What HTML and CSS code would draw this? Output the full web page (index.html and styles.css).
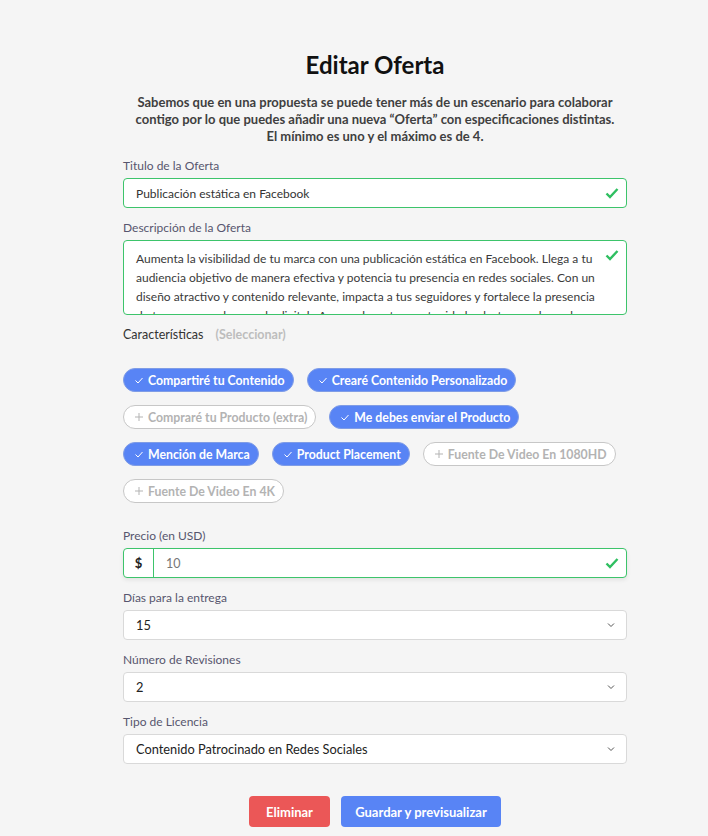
FILE: index.html
```html
<!DOCTYPE html>
<html lang="es">

<head>
    <meta charset="UTF-8">
    <meta name="viewport" content="width=device-width, initial-scale=1.0">
    <title>Editar Oferta</title>
    <link rel="stylesheet" href="styles.css">
</head>

<body>
    <main class="offer">
        <h1 class="offer-title">Editar Oferta</h1>
        <p class="offer-intro">Sabemos que en una propuesta se puede tener más de un escenario para colaborar<br>
            contigo por lo que puedes añadir una nueva “Oferta” con especificaciones distintas.<br>
            El mínimo es uno y el máximo es de 4.</p>

        <form class="offer-form">
            <div class="field">
                <label class="field-label" for="title">Titulo de la Oferta</label>
                <div class="control valid">
                    <input class="control-input small" type="text" id="title" value="Publicación estática en Facebook">
                    <svg class="check" viewBox="0 0 16 16"><path d="M2.5 8.5l3.5 3.5 7.5-8" /></svg>
                </div>
            </div>

            <div class="field">
                <label class="field-label" for="desc">Descripción de la Oferta</label>
                <div class="control valid area">
                    <div class="control-text" id="desc">Aumenta la visibilidad de tu marca con una publicación estática en Facebook. Llega a tu audiencia objetivo de manera efectiva y potencia tu presencia en redes sociales. Con un diseño atractivo y contenido relevante, impacta a tus seguidores y fortalece la presencia de tu marca en el mercado digital. ¡Aprovecha esta oportunidad y destaca en las redes sociales!</div>
                    <svg class="check top" viewBox="0 0 16 16"><path d="M2.5 8.5l3.5 3.5 7.5-8" /></svg>
                </div>
            </div>

            <div class="features">
                <div class="features-head">
                    <span>Características</span>
                    <span class="hint">(Seleccionar)</span>
                </div>
                <div class="chips">
                    <span class="chip on"><svg viewBox="0 0 10 10"><path d="M1.5 5.5l2.5 2.5 4.5-5" /></svg>Compartiré tu Contenido</span>
                    <span class="chip on"><svg viewBox="0 0 10 10"><path d="M1.5 5.5l2.5 2.5 4.5-5" /></svg>Crearé Contenido Personalizado</span>
                    <span class="chip"><svg viewBox="0 0 10 10"><path d="M5 1v8M1 5h8" /></svg>Compraré tu Producto (extra)</span>
                    <span class="chip on"><svg viewBox="0 0 10 10"><path d="M1.5 5.5l2.5 2.5 4.5-5" /></svg>Me debes enviar el Producto</span>
                    <span class="chip on"><svg viewBox="0 0 10 10"><path d="M1.5 5.5l2.5 2.5 4.5-5" /></svg>Mención de Marca</span>
                    <span class="chip on"><svg viewBox="0 0 10 10"><path d="M1.5 5.5l2.5 2.5 4.5-5" /></svg>Product Placement</span>
                    <span class="chip"><svg viewBox="0 0 10 10"><path d="M5 1v8M1 5h8" /></svg>Fuente De Video En 1080HD</span>
                    <span class="chip"><svg viewBox="0 0 10 10"><path d="M5 1v8M1 5h8" /></svg>Fuente De Video En 4K</span>
                </div>
            </div>

            <div class="field">
                <label class="field-label" for="price">Precio (en USD)</label>
                <div class="control valid shadow">
                    <span class="prefix">$</span>
                    <input class="control-input light" type="text" id="price" value="10">
                    <svg class="check" viewBox="0 0 16 16"><path d="M2.5 8.5l3.5 3.5 7.5-8" /></svg>
                </div>
            </div>

            <div class="field">
                <label class="field-label" for="days">Días para la entrega</label>
                <div class="control">
                    <span class="control-input" id="days">15</span>
                    <svg class="chevron" viewBox="0 0 10 10"><path d="M2 3.5l3 3 3-3" /></svg>
                </div>
            </div>

            <div class="field">
                <label class="field-label" for="revs">Número de Revisiones</label>
                <div class="control">
                    <span class="control-input" id="revs">2</span>
                    <svg class="chevron" viewBox="0 0 10 10"><path d="M2 3.5l3 3 3-3" /></svg>
                </div>
            </div>

            <div class="field">
                <label class="field-label" for="lic">Tipo de Licencia</label>
                <div class="control">
                    <span class="control-input" id="lic">Contenido Patrocinado en Redes Sociales</span>
                    <svg class="chevron" viewBox="0 0 10 10"><path d="M2 3.5l3 3 3-3" /></svg>
                </div>
            </div>

            <div class="actions">
                <button type="button" class="btn danger">Eliminar</button>
                <button type="button" class="btn primary">Guardar y previsualizar</button>
            </div>
        </form>
    </main>
</body>

</html>
```

FILE: styles.css
```css
* {
    padding: 0;
    margin: 0;
    box-sizing: border-box;
}

body {
    background-color: #f5f5f5;
    font-family: Lato, "Open Sans", sans-serif;
    color: #333;
}

.offer {
    width: 504px;
    margin-left: 123px;
    padding-top: 48px;
}

.offer-title {
    text-align: center;
    font-size: 24px;
    font-weight: 700;
    color: #111;
    line-height: 34px;
}

.offer-intro {
    margin-top: 12px;
    text-align: center;
    font-size: 13px;
    font-weight: 700;
    line-height: 17px;
    color: #3f3f3f;
    white-space: nowrap;
}

.offer-form {
    margin-top: 13px;
}

.field {
    margin-bottom: 12px;
}

.field-label {
    display: block;
    font-size: 12px;
    color: #57566e;
    line-height: 15px;
    margin-bottom: 5px;
}

.control {
    display: flex;
    align-items: center;
    height: 30px;
    background-color: #fff;
    border: 1px solid #d9d9d9;
    border-radius: 4px;
}

.control.valid {
    border-color: #3dc46b;
}

.control.shadow {
    box-shadow: 0 2px 4px rgba(0, 0, 0, 0.08);
}

.control.area {
    height: 75px;
    align-items: flex-start;
    overflow: hidden;
}

.control-input {
    flex: 1;
    border: none;
    outline: none;
    background: none;
    font-family: inherit;
    font-size: 12.8px;
    color: #222;
    padding: 0 12px;
}

.control-input.small {
    font-size: 12px;
    color: #333;
}

.control-input.light {
    font-size: 12.5px;
    color: #777;
}

.control-text {
    flex: 1;
    font-size: 12px;
    line-height: 19px;
    color: #3a3a3a;
    padding: 8px 4px 0 12px;
}

.prefix {
    width: 30px;
    height: 100%;
    display: flex;
    align-items: center;
    justify-content: center;
    border-right: 1px solid #3dc46b;
    font-size: 13px;
    font-weight: 700;
    color: #222;
}

.check {
    width: 16px;
    height: 16px;
    margin-right: 6px;
    flex-shrink: 0;
    fill: none;
    stroke: #2fbf61;
    stroke-width: 2.4;
}

.check.top {
    margin-top: 6px;
}

.chevron {
    width: 10px;
    height: 10px;
    margin-right: 10px;
    fill: none;
    stroke: #555;
    stroke-width: 1;
}

.features {
    margin-bottom: 25px;
}

.features-head {
    display: flex;
    gap: 12px;
    font-size: 12.5px;
    line-height: 15px;
    color: #333;
}

.features-head .hint {
    font-weight: 700;
    color: #bdbdbd;
}

.chips {
    display: flex;
    flex-wrap: wrap;
    gap: 13px;
    margin-top: 26px;
}

.chip {
    height: 24px;
    display: inline-flex;
    align-items: center;
    gap: 4px;
    padding: 0 8px 0 10px;
    border-radius: 12px;
    border: 1px solid #c7c7c7;
    background-color: #fff;
    color: #b3b3b3;
    font-size: 12.3px;
    font-weight: 700;
}

.chip svg {
    width: 10px;
    height: 10px;
    fill: none;
    stroke: currentColor;
    stroke-width: 1;
}

.chip.on {
    background-color: #5884f5;
    border-color: #7f9ce6;
    color: #fff;
}

.actions {
    display: flex;
    justify-content: center;
    gap: 11px;
    margin-top: 32px;
}

.btn {
    height: 31px;
    border: none;
    border-radius: 4px;
    color: #fff;
    font-family: inherit;
    font-size: 13px;
    font-weight: 700;
    white-space: nowrap;
    cursor: pointer;
}

.btn.danger {
    background-color: #eb5757;
    width: 81px;
}

.btn.primary {
    background-color: #5884f5;
    width: 160px;
}
```
